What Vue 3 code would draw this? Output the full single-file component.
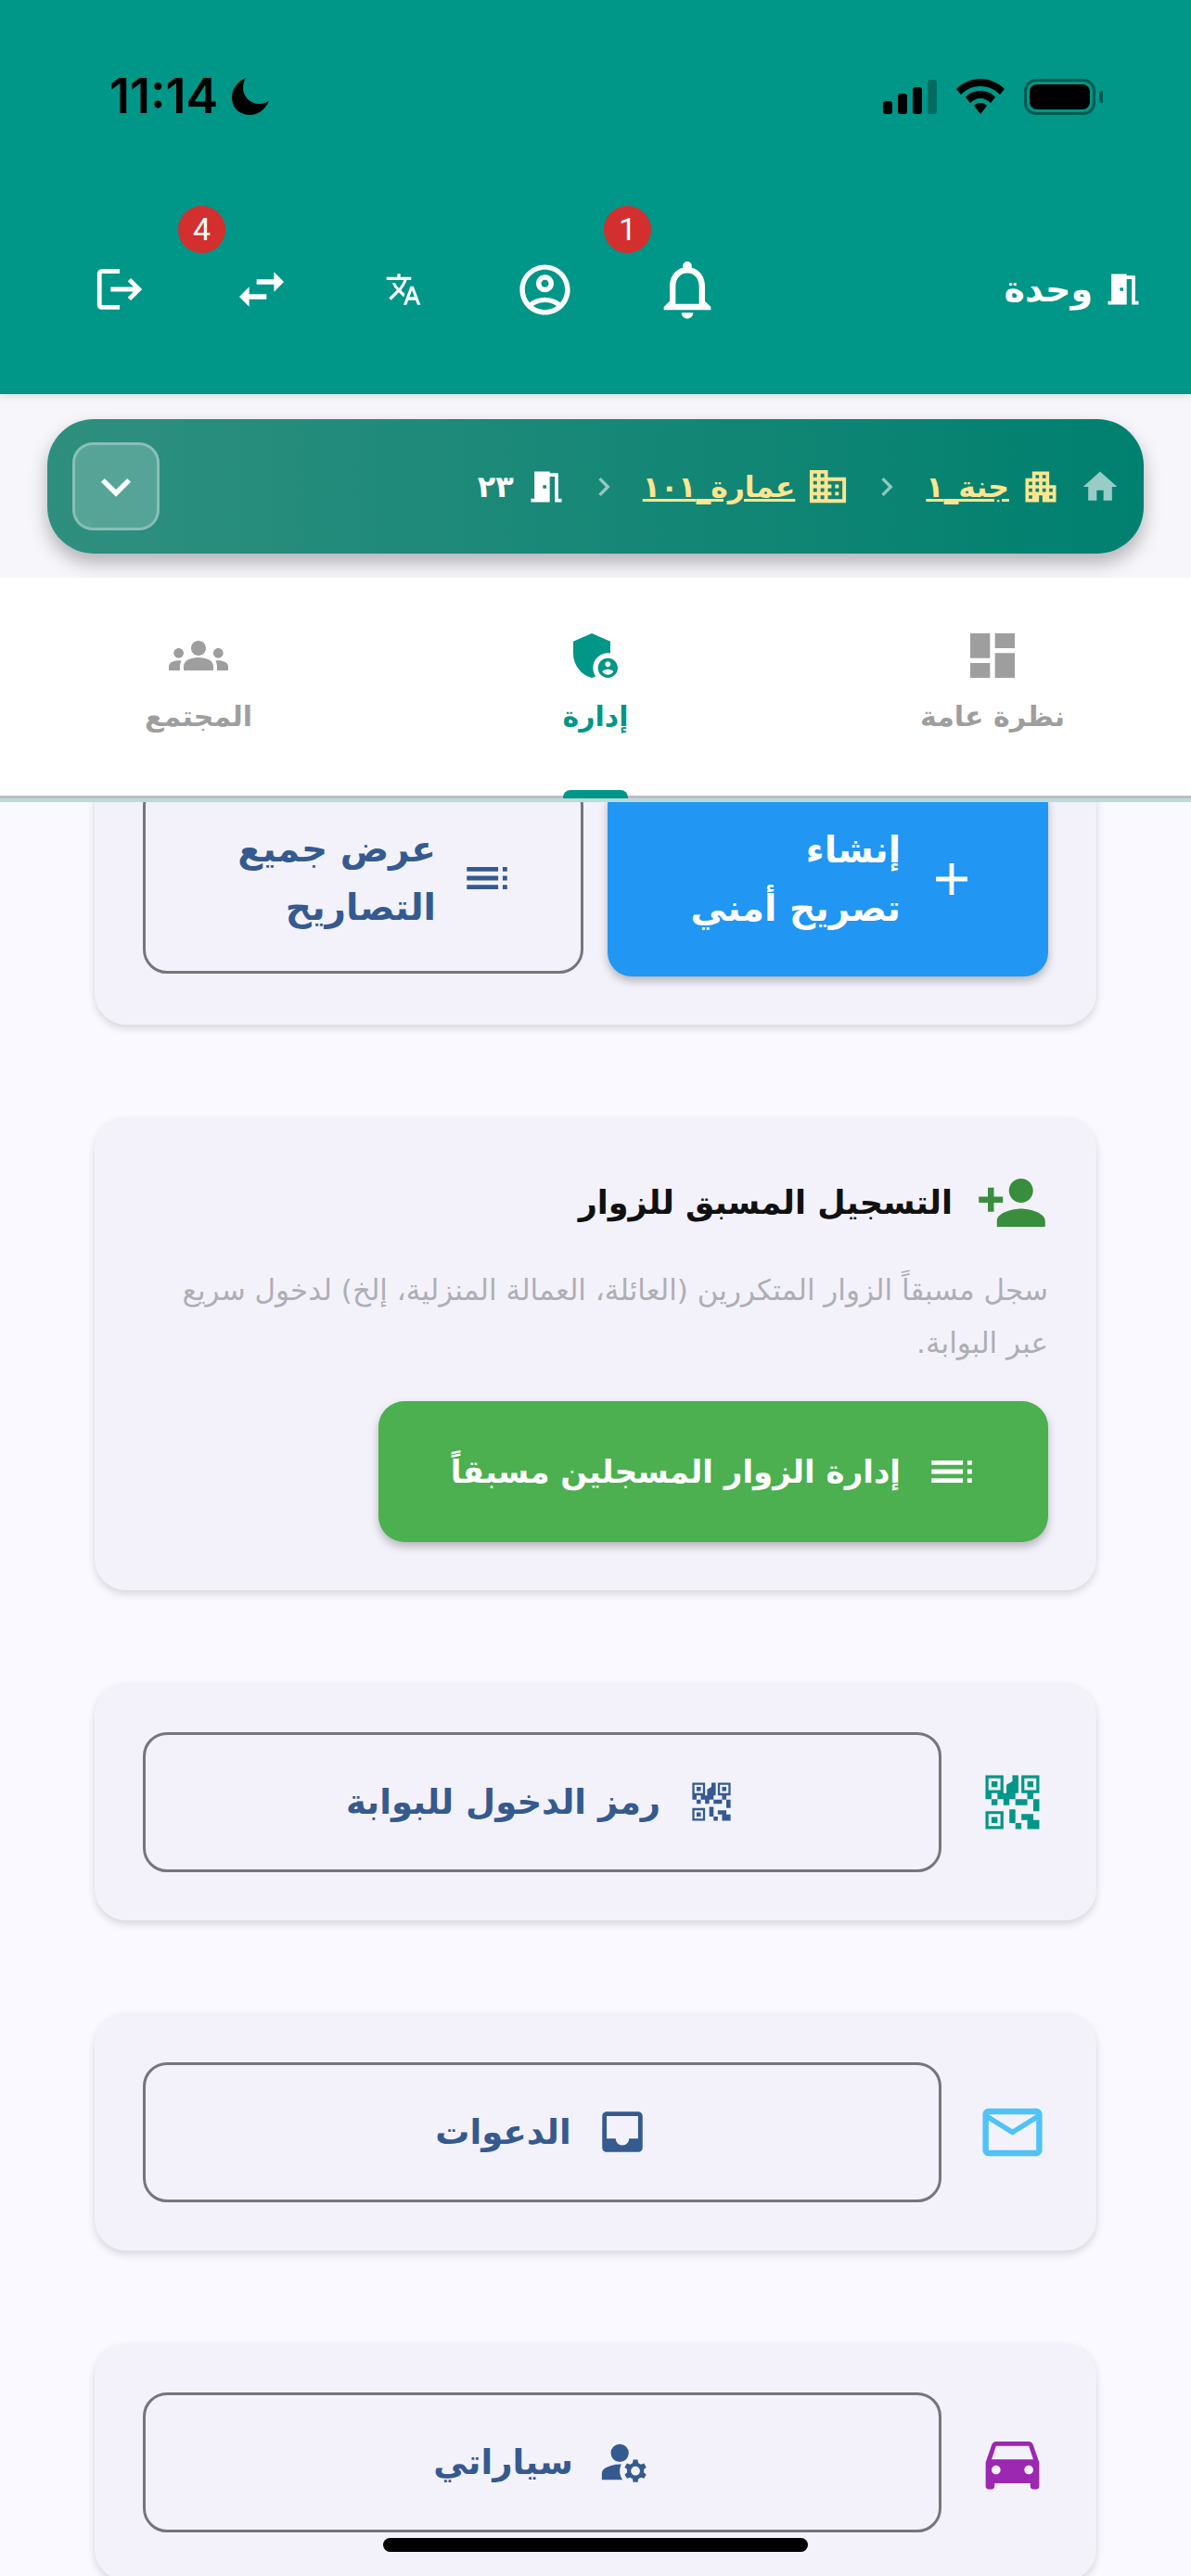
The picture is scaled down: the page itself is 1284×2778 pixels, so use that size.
<script setup>
const paths = {
  logout: 'M17 7l-1.41 1.41L18.17 11H8v2h10.17l-2.58 2.58L17 17l5-5zM4 5h8V3H4c-1.1 0-2 .9-2 2v14c0 1.1.9 2 2 2h8v-2H4V5z',
  swap: 'M6.99 11L3 15l3.99 4v-3H14v-2H6.99v-3zM21 9l-3.99-4v3H10v2h7.01v3L21 9z',
  translate: 'M12.87 15.07l-2.54-2.51.03-.03c1.74-1.94 2.98-4.17 3.71-6.53H17V4h-7V2H8v2H1v1.99h11.17C11.5 7.92 10.44 9.75 9 11.35 8.07 10.32 7.3 9.19 6.69 8h-2c.73 1.63 1.73 3.17 2.98 4.56l-5.09 5.02L4 19l5-5 3.11 3.11.76-2.04zM18.5 10h-2L12 22h2l1.12-3h4.75L21 22h2l-4.5-12zm-2.62 7l1.62-4.33L19.12 17h-3.24z',
  account: 'M12 2C6.48 2 2 6.48 2 12s4.48 10 10 10 10-4.48 10-10S17.52 2 12 2zM7.35 18.5C8.66 17.56 10.26 17 12 17s3.34.56 4.65 1.5c-1.31.94-2.91 1.5-4.65 1.5s-3.34-.56-4.65-1.5zm10.79-1.38C16.45 15.8 14.32 15 12 15s-4.45.8-6.14 2.12C4.7 15.73 4 13.95 4 12c0-4.42 3.58-8 8-8s8 3.58 8 8c0 1.95-.7 3.73-1.86 5.12zM12 6c-1.93 0-3.5 1.57-3.5 3.5S10.07 13 12 13s3.5-1.57 3.5-3.5S13.93 6 12 6zm0 5c-.83 0-1.5-.67-1.5-1.5S11.17 8 12 8s1.5.67 1.5 1.5S12.83 11 12 11z',
  bell: 'M12 22c1.1 0 2-.9 2-2h-4c0 1.1.9 2 2 2zm6-6v-5c0-3.07-1.63-5.64-4.5-6.32V4c0-.83-.67-1.5-1.5-1.5s-1.5.67-1.5 1.5v.68C7.64 5.36 6 7.92 6 11v5l-2 2v1h16v-1l-2-2zm-2 1H8v-6c0-2.48 1.51-4.5 4-4.5s4 2.02 4 4.5v6z',
  door: 'M14 6v15H3v-2h2V3h9v1h5v15h2v2h-4V6h-3zm-4 5v2h2v-2h-2z',
  home: 'M10 20v-6h4v6h5v-8h3L12 3 2 12h3v8z',
  apartment: 'M17 11V3H7v4H3v14h8v-4h2v4h8V11h-4zM7 19H5v-2h2v2zm0-4H5v-2h2v2zm0-4H5V9h2v2zm4 4H9v-2h2v2zm0-4H9V9h2v2zm0-4H9V5h2v2zm4 8h-2v-2h2v2zm0-4h-2V9h2v2zm0-4h-2V5h2v2zm4 12h-2v-2h2v2zm0-4h-2v-2h2v2z',
  business: 'M12 7V3H2v18h20V7H12zM6 19H4v-2h2v2zm0-4H4v-2h2v2zm0-4H4V9h2v2zm0-4H4V5h2v2zm4 12H8v-2h2v2zm0-4H8v-2h2v2zm0-4H8V9h2v2zm0-4H8V5h2v2zm10 12h-8v-2h2v-2h-2v-2h2v-2h-2V9h8v10zm-2-8h-2v2h2v-2zm0 4h-2v2h2v-2z',
  chevron: 'M10 6L8.59 7.41 13.17 12l-4.58 4.59L10 18l6-6z',
  expand: 'M16.59 8.59L12 13.17 7.41 8.59 6 10l6 6 6-6z',
  dashboard: 'M3 13h8V3H3v10zm0 8h8v-6H3v6zm10 0h8V11h-8v10zm0-18v6h8V3h-8z',
  admin: 'M17 11c.34 0 .67.04 1 .09V6.27L10.5 3 3 6.27v4.91c0 4.54 3.2 8.79 7.5 9.82.55-.13 1.08-.32 1.6-.55-.69-.98-1.1-2.17-1.1-3.45 0-3.31 2.69-6 6-6zM17 13c-2.21 0-4 1.79-4 4s1.79 4 4 4 4-1.79 4-4-1.79-4-4-4zm0 1.38c.62 0 1.12.51 1.12 1.12s-.51 1.12-1.12 1.12-1.12-.51-1.12-1.12.5-1.12 1.12-1.12zm0 5.37c-.93 0-1.74-.46-2.24-1.17.05-.72 1.51-1.08 2.24-1.08s2.19.36 2.24 1.08c-.5.71-1.31 1.17-2.24 1.17z',
  groups: 'M12 12.75c1.63 0 3.07.39 4.24.9 1.08.48 1.76 1.56 1.76 2.73V18H6v-1.61c0-1.18.68-2.26 1.76-2.73 1.17-.52 2.61-.91 4.24-.91zM4 13c1.1 0 2-.9 2-2s-.9-2-2-2-2 .9-2 2 .9 2 2 2zm1.13 1.1C4.76 14.04 4.39 14 4 14c-.99 0-1.93.21-2.78.58C.48 14.9 0 15.62 0 16.43V18h4.5v-1.61c0-.83.23-1.61.63-2.29zM20 13c1.1 0 2-.9 2-2s-.9-2-2-2-2 .9-2 2 .9 2 2 2zm4 3.43c0-.81-.48-1.53-1.22-1.85-.85-.37-1.79-.58-2.78-.58-.39 0-.76.04-1.13.1.4.68.63 1.46.63 2.29V18H24v-1.57zM12 6c1.66 0 3 1.34 3 3s-1.34 3-3 3-3-1.34-3-3 1.34-3 3-3z',
  add: 'M19 13h-6v6h-2v-6H5v-2h6V5h2v6h6v2z',
  list: 'M3 13h2v-2H3v2zm0 4h2v-2H3v2zm0-8h2V7H3v2zm4 4h14v-2H7v2zm0 4h14v-2H7v2zM7 7v2h14V7H7z',
  personAdd: 'M15 12c2.21 0 4-1.79 4-4s-1.79-4-4-4-4 1.79-4 4 1.79 4 4 4zm-9-2V7H4v3H1v2h3v3h2v-3h3v-2H6zm9 4c-2.67 0-8 1.34-8 4v2h16v-2c0-2.66-5.33-4-8-4z',
  qr: 'M0 0h3v3H0zM.5.5h2v2h-2zM1 1h1v1H1zM6 0h3v3H6zM6.5.5h2v2h-2zM7 1h1v1H7zM0 6h3v3H0zM.5 6.5h2v2h-2zM1 7h1v1H1zM4.5 0h1v1h-1zM3.5 1.6l1-.6h1v2h-2zM0 3h1v1H0zM2 3h3v1H4v1H3V4H2zM7 3h1v1H7zM1 4h1v1H1zM5 4h2v1H5zM8 4h1v2H8zM4 5.7h1V8H4zM5 8h1v1H5zM6 6.5h2v1H6zM7 7.5h2V9H7z',
  mail: 'M20 4H4c-1.1 0-1.99.9-1.99 2L2 18c0 1.1.9 2 2 2h16c1.1 0 2-.9 2-2V6c0-1.1-.9-2-2-2zm0 14H4V8l8 5 8-5v10zm-8-7L4 6h16l-8 5z',
  inbox: 'M19 3H4.99c-1.11 0-1.98.89-1.98 2L3 19c0 1.1.88 2 1.99 2H19c1.1 0 2-.9 2-2V5c0-1.11-.9-2-2-2zm0 12h-4c0 1.66-1.35 3-3 3s-3-1.34-3-3H4.99V5H19v10z',
  car: 'M18.92 6.01C18.72 5.42 18.16 5 17.5 5h-11c-.66 0-1.21.42-1.42 1.01L3 12v8c0 .55.45 1 1 1h1c.55 0 1-.45 1-1v-1h12v1c0 .55.45 1 1 1h1c.55 0 1-.45 1-1v-8l-2.08-5.99zM6.5 16c-.83 0-1.5-.67-1.5-1.5S5.67 13 6.5 13s1.5.67 1.5 1.5S7.33 16 6.5 16zm11 0c-.83 0-1.5-.67-1.5-1.5s.67-1.5 1.5-1.5 1.5.67 1.5 1.5-.67 1.5-1.5 1.5zM5 11l1.5-4.5h11L19 11H5z',
  manage: 'M10 4a4 4 0 1 0 0 8a4 4 0 0 0 0-8zM10.67 13.02C10.45 13.01 10.23 13 10 13c-2.42 0-4.68.67-6.61 1.82C2.51 15.34 2 16.32 2 17.35V20h9.26c-.79-1.13-1.26-2.51-1.26-4 0-1.07.25-2.07.67-2.98zM20.75 16c0-.22-.03-.42-.06-.63l1.14-1.01-1-1.73-1.45.49c-.32-.27-.68-.48-1.08-.63L18 11h-2l-.3 1.49c-.4.15-.76.36-1.08.63l-1.45-.49-1 1.73 1.14 1.01c-.03.21-.06.41-.06.63s.03.42.06.63l-1.14 1.01 1 1.73 1.45-.49c.32.27.68.48 1.08.63L16 21h2l.3-1.49c.4-.15.76-.36 1.08-.63l1.45.49 1-1.73-1.14-1.01c.03-.21.06-.41.06-.63zM17 18c-1.1 0-2-.9-2-2s.9-2 2-2 2 .9 2 2-.9 2-2 2z'
}
const tabs = [
  { label: 'نظرة عامة', icon: 'dashboard' },
  { label: 'إدارة', icon: 'admin', active: true },
  { label: 'المجتمع', icon: 'groups' }
]
const vb24 = '0 0 24 24'
const rows = [
  { label: 'رمز الدخول للبوابة', side: 'qr', sideVb: '-1.47 -1.47 11.95 11.95', sideClass: 'teal', icon: 'qr', iconVb: '-1.83 -1.83 12.66 12.66' },
  { label: 'الدعوات', side: 'mail', sideVb: vb24, sideClass: 'sky', icon: 'inbox', iconVb: vb24 },
  { label: 'سياراتي', side: 'car', sideVb: vb24, sideClass: 'purple', icon: 'manage', iconVb: vb24 }
]
</script>

<template>
  <div class="screen" dir="rtl">
    <header class="appbar">
      <div class="status" dir="ltr">
        <div class="status-left">
          <span class="time">11:14</span>
          <svg class="moon" viewBox="0 0 40 40"><path d="M15 0C6 4 0 12 0 21c0 11 8 19 19 19 9 0 17-6 21-15-3 2-7 3-11 3C20 28 12 20 12 11c0-4 1-8 3-11z"/></svg>
        </div>
        <div class="status-right">
          <div class="signal"><i class="s1"></i><i class="s2"></i><i class="s3"></i><i class="s4"></i></div>
          <svg class="wifi" viewBox="0 0 52 38"><path d="M26 0C16 0 7 4 0 11l5 6c6-6 13-9 21-9s15 3 21 9l5-6C45 4 36 0 26 0zM26 13c-6 0-12 2-16 7l5 6c3-3 7-5 11-5s8 2 11 5l5-6c-4-5-10-7-16-7zM26 26c-3 0-5 1-7 3l7 9 7-9c-2-2-4-3-7-3z"/></svg>
          <div class="battery"><div class="battery-body"><span></span></div><i></i></div>
        </div>
      </div>
      <div class="toolbar">
        <div class="unit-title">
          <svg class="door" viewBox="0 0 24 24"><path :d="paths.door"/></svg>
          <span>وحدة</span>
        </div>
        <div class="actions">
          <div class="action">
            <svg class="bell" viewBox="0 0 24 24"><path :d="paths.bell"/></svg>
            <b class="badge">1</b>
          </div>
          <div class="action"><svg class="account" viewBox="0 0 24 24"><path :d="paths.account"/></svg></div>
          <div class="action"><svg class="trans" viewBox="0 0 24 24"><path :d="paths.translate"/></svg></div>
          <div class="action">
            <svg class="swap" viewBox="0 0 24 24"><path :d="paths.swap"/></svg>
            <b class="badge">4</b>
          </div>
          <div class="action"><svg class="out" viewBox="0 0 24 24"><path :d="paths.logout"/></svg></div>
        </div>
      </div>
    </header>

    <div class="crumb-wrap">
      <nav class="crumbs">
        <svg class="cico home" viewBox="0 0 24 24"><path :d="paths.home"/></svg>
        <svg class="cico gold" viewBox="0 0 24 24"><path :d="paths.apartment"/></svg>
        <span class="clink">جنة_١</span>
        <svg class="sep" viewBox="0 0 24 24"><path :d="paths.chevron"/></svg>
        <svg class="cico gold biz" viewBox="0 0 24 24"><path :d="paths.business"/></svg>
        <span class="clink">عمارة_١٠١</span>
        <svg class="sep" viewBox="0 0 24 24"><path :d="paths.chevron"/></svg>
        <svg class="cico white" viewBox="0 0 24 24"><path :d="paths.door"/></svg>
        <span class="ccur">٢٣</span>
        <button class="toggle"><svg viewBox="0 0 24 24"><path :d="paths.expand"/></svg></button>
      </nav>
    </div>

    <div class="tabs">
      <div v-for="t in tabs" :key="t.label" class="tab" :class="{ active: t.active }">
        <svg viewBox="0 0 24 24"><path :d="paths[t.icon]"/></svg>
        <span>{{ t.label }}</span>
        <i v-if="t.active" class="indicator"></i>
      </div>
    </div>

    <main class="scroller">
      <section class="card first">
        <div class="pair">
          <button class="btn blue">
            <svg class="mini" viewBox="0 0 24 24"><path :d="paths.add"/></svg>
            <span>إنشاء<br>تصريح أمني</span>
          </button>
          <button class="btn outline twoline">
            <svg class="mini flip" viewBox="0 0 24 24"><path :d="paths.list"/></svg>
            <span>عرض جميع<br>التصاريح</span>
          </button>
        </div>
      </section>

      <section class="card">
        <h2 class="title">
          <svg viewBox="0 0 24 24"><path :d="paths.personAdd"/></svg>
          <span>التسجيل المسبق للزوار</span>
        </h2>
        <p class="desc">سجل مسبقاً الزوار المتكررين (العائلة، العمالة المنزلية، إلخ) لدخول سريع عبر البوابة.</p>
        <button class="btn green">
          <svg class="mini flip" viewBox="0 0 24 24"><path :d="paths.list"/></svg>
          <span>إدارة الزوار المسجلين مسبقاً</span>
        </button>
      </section>

      <section v-for="r in rows" :key="r.label" class="card row">
        <svg class="side" :class="r.sideClass" :viewBox="r.sideVb"><path :d="paths[r.side]" fill-rule="evenodd"/></svg>
        <button class="btn outline wide">
          <svg class="mini" :viewBox="r.iconVb"><path :d="paths[r.icon]" fill-rule="evenodd"/></svg>
          <span>{{ r.label }}</span>
        </button>
      </section>
    </main>

    <div class="home-bar"></div>
  </div>
</template>

<style>
html, body { margin: 0; background: #f9f9ff; }
</style>

<style scoped>
.screen {
  position: relative;
  width: 1284px;
  height: 2778px;
  overflow: hidden;
  display: flex;
  flex-direction: column;
  background: #f9f9ff;
  font-family: "DejaVu Sans", "Noto Sans", sans-serif;
}
svg { display: block; fill: currentColor; flex: none; }

.appbar {
  height: 425px;
  box-sizing: border-box;
  flex: none;
  background: #009688;
  box-shadow: 0 2px 8px rgba(0,0,0,.12);
  position: relative;
  z-index: 3;
  padding-top: 80px;
}
.status { display: flex; justify-content: space-between; align-items: center; padding: 0 95px 0 118px; height: 48px; color: #000; }
.status-left { display: flex; align-items: center; gap: 15px; }
.time { font: 600 52px/48px Inter, sans-serif; }
.moon { width: 40px; height: 40px; }
.status-right { display: flex; align-items: center; gap: 21px; }
.signal { display: flex; align-items: flex-end; gap: 6px; height: 37px; }
.signal i { width: 10px; border-radius: 3px; background: #000; }
.s1 { height: 14px; } .s2 { height: 22px; } .s3 { height: 29px; }
.signal .s4 { height: 37px; background: rgba(0,0,0,.28); }
.wifi { width: 52px; height: 38px; }
.battery { display: flex; align-items: center; gap: 4px; }
.battery-body { width: 77px; height: 39px; box-sizing: border-box; border: 3px solid rgba(0,0,0,.4); border-radius: 13px; padding: 3px; }
.battery-body span { display: block; height: 100%; background: #000; border-radius: 8px; }
.battery i { width: 4px; height: 13px; background: rgba(0,0,0,.4); border-radius: 3px 0 0 3px; }

.toolbar { display: flex; justify-content: space-between; align-items: center; padding: 0 51px 0 52px; margin-top: 139px; height: 90px; color: #fff; }
.unit-title { display: flex; align-items: center; gap: 11px; font-weight: 700; font-size: 38px; line-height: 40px; }
.door { width: 44px; height: 44px; }
.actions { display: flex; align-items: center; }
.action { position: relative; width: 153px; height: 90px; display: flex; align-items: center; justify-content: center; }
.bell { width: 76px; height: 76px; }
.account { width: 65px; height: 65px; }
.trans { width: 40px; height: 40px; }
.swap { width: 64px; height: 64px; }
.out { width: 58px; height: 58px; }
.badge {
  position: absolute; top: -45px; right: 115px; width: 51px; height: 51px; border-radius: 50%;
  background: #d32f2f; color: #fff; font: 400 34px/51px Roboto, sans-serif; text-align: center;
}

.crumb-wrap { height: 198px; flex: none; box-sizing: border-box; padding: 27px 51px 0; background: #f6f6fb; }
.crumbs {
  height: 145px; box-sizing: border-box; display: flex; align-items: center; padding: 0 25px 0 27px;
  border-radius: 50px; color: #fff;
  background: linear-gradient(to left, #00806f, #2f8f7f);
  box-shadow: 0 10px 20px rgba(0,0,0,.28);
}
.cico { width: 44px; height: 44px; }
.home { color: rgba(255,255,255,.6); margin-left: 20px; }
.gold { color: #ffe58f; margin-left: 12px; }
.biz { width: 47px; height: 47px; }
.white { color: #fff; margin-left: 13px; }
.clink { color: #ffe58f; font-size: 31.5px; font-weight: 700; text-decoration: underline; white-space: nowrap; }
.ccur { font-size: 32px; font-weight: 700; }
.sep { width: 40px; height: 40px; margin: 0 22px 0 20px; color: rgba(255,255,255,.55); }
.toggle {
  margin-right: auto; width: 94px; height: 95px; border-radius: 22px; padding: 0;
  box-sizing: border-box; background: rgba(255,255,255,.2); border: 3px solid rgba(255,255,255,.3);
  color: #fff; display: flex; align-items: center; justify-content: center;
}
.toggle svg { width: 64px; height: 64px; }

.tabs {
  height: 242px; flex: none; box-sizing: border-box; display: grid; grid-template-columns: repeat(3, 1fr);
  background: #fff; border-bottom: 4px solid #b8dcdb; position: relative; z-index: 2;
  box-shadow: inset 0 -3px 0 #bdbcc4;
}
.tab { position: relative; display: flex; flex-direction: column; align-items: center; padding-top: 52px; color: #9e9e9e; font-size: 30px; line-height: 40px; font-weight: 700; }
.tab svg { width: 64px; height: 64px; margin-bottom: 14px; }
.tab.active { color: #009688; }
.indicator { position: absolute; left: 50%; bottom: 0; width: 70px; height: 9px; margin-left: -35px; background: #009688; border-radius: 8px 8px 0 0; }

.scroller { flex: 1; min-height: 0; overflow: hidden; padding: 0 102px; display: flex; flex-direction: column; gap: 100px; }
.card {
  flex: none; box-sizing: border-box; background: #f3f2fa; border-radius: 34px; padding: 52px;
  box-shadow: 0 4px 8px rgba(0,0,0,.14);
}
.first { margin-top: -74px; }
.pair { display: grid; grid-template-columns: 475px 1fr; gap: 26px; height: 210px; }
.btn {
  font-family: inherit; font-weight: 700; display: flex; align-items: center; box-sizing: border-box; border: 0;
  border-radius: 26px; padding: 0; line-height: 63px; gap: 26px;
}
.blue { background: #2196f3; color: #fff; padding-right: 75px; font-size: 39px; text-align: right; box-shadow: 0 5px 10px rgba(0,0,0,.25); }
.outline { background: transparent; color: #355a8f; border: 3px solid #74757e; }
.twoline { padding-right: 72px; margin-bottom: 3px; font-size: 39px; text-align: right; }
.mini { width: 58px; height: 58px; }
.flip { transform: scaleX(-1); }
.title { margin: 0; display: flex; align-items: center; gap: 25px; color: #111; font-size: 35px; line-height: 60px; font-weight: 700; }
.title svg { width: 78px; height: 80px; color: #388e3c; }
.desc { margin: 26px 0 0; font-size: 31px; line-height: 57px; color: #aeaeb5; }
.green { margin-top: 34px; width: 722px; height: 152px; background: #4caf50; color: #fff; border-radius: 28px; padding-right: 75px; font-size: 34px; box-shadow: 0 5px 10px rgba(0,0,0,.25); }
.row { display: flex; align-items: center; gap: 38px; height: 256px; }
.side { width: 77px; height: 77px; }
.teal { color: #009688; } .sky { color: #4fc3f7; } .purple { color: #9c27b0; }
.wide { flex: 1; height: 151px; justify-content: center; font-size: 37px; }

.home-bar { position: absolute; left: 413px; bottom: 26px; width: 458px; height: 15px; border-radius: 8px; background: #000; z-index: 5; }
</style>
